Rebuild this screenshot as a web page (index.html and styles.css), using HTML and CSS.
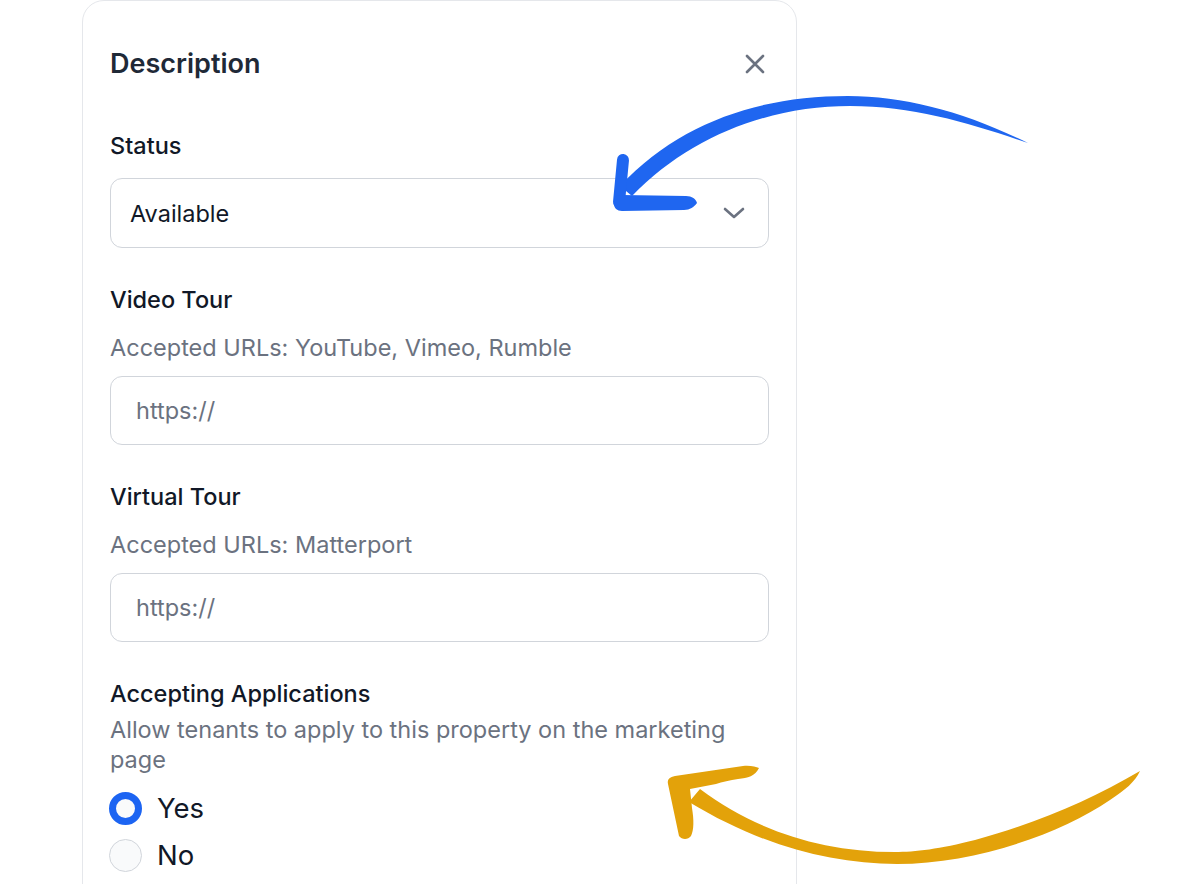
FILE: index.html
```html
<!DOCTYPE html>
<html lang="en">
<head>
<meta charset="utf-8">
<title>Description</title>
<link rel="stylesheet" href="styles.css">
</head>
<body>
<div class="page">
  <section class="card">
    <header class="card-head">
      <h2 class="title">Description</h2>
      <button class="close" type="button" aria-label="Close">
        <svg viewBox="0 0 20 20" width="20" height="20"><path d="M2 2 L18 18 M18 2 L2 18" stroke="#6b7280" stroke-width="2.6" stroke-linecap="round" fill="none"/></svg>
      </button>
    </header>

    <div class="field">
      <label class="label">Status</label>
      <div class="select">
        <span class="select-value">Available</span>
        <svg class="chevron" viewBox="0 0 22 12" width="22" height="12"><path d="M2 2 L11 10 L20 2" stroke="#6b7280" stroke-width="2.6" stroke-linecap="round" stroke-linejoin="round" fill="none"/></svg>
      </div>
    </div>

    <div class="field">
      <label class="label">Video Tour</label>
      <p class="hint">Accepted URLs: YouTube, Vimeo, Rumble</p>
      <div class="input"><span class="placeholder">https://</span></div>
    </div>

    <div class="field">
      <label class="label">Virtual Tour</label>
      <p class="hint">Accepted URLs: Matterport</p>
      <div class="input"><span class="placeholder">https://</span></div>
    </div>

    <div class="field">
      <label class="label">Accepting Applications</label>
      <p class="hint desc">Allow tenants to apply to this property on the marketing page</p>
      <div class="radios">
        <div class="radio-row"><span class="radio checked"></span><span class="radio-label">Yes</span></div>
        <div class="radio-row"><span class="radio"></span><span class="radio-label">No</span></div>
      </div>
    </div>
  </section>

  <svg class="arrows" viewBox="0 0 1180 884" width="1180" height="884">
    <path fill="#1f66f0" d="M1028,143 C965,112 905,96 848,96 C760,96 680,122 620,186 L632,196 C690,136 770,106 850,106 C915,106 972,124 1028,143 Z"/>
    <path d="M623,160 L619,202" stroke="#1f66f0" stroke-width="12" stroke-linecap="round" fill="none"/>
    <path fill="#1f66f0" d="M614,200 C614,196 618,195 622,195 L686,196 C692,196 696,199 697,203 C694,207 690,210 684,210 L622,211 C617,211 614,208 614,204 Z"/>
    <path fill="#e3a20a" d="M1140,771 C1090,800 1040,822 975,840 C940,849 915,852 895,852 C820,852 755,830 700,789 L689,802 C760,845 830,864 897,864 C975,864 1060,834 1110,800 C1125,790 1135,782 1140,771 Z"/>
    <path fill="#e3a20a" d="M668,784 C667,779 670,777 675,776 L743,766 C750,765 756,767 759,768 C755,776 748,778 738,779 C730,780 722,782 716,784 L690,789 L692,808 C694,820 694,830 691,836 C688,840 682,840 679,836 Z"/>
  </svg>
</div>
</body>
</html>
```

FILE: styles.css
```css
* { box-sizing: border-box; }

html, body {
  margin: 0;
  padding: 0;
  background: #ffffff;
}

body {
  font-family: Inter, "Noto Sans", "Liberation Sans", sans-serif;
  color: #111827;
  width: 1180px;
  height: 884px;
  overflow: hidden;
}

.page {
  position: relative;
  width: 1180px;
  height: 884px;
  overflow: hidden;
}

.card {
  margin-left: 82px;
  width: 715px;
  height: 1000px;
  border: 1px solid #e5e7eb;
  border-radius: 22px;
  padding: 46px 27px 0 27px;
  display: flex;
  flex-direction: column;
  gap: 37px;
}

.card-head {
  display: flex;
  align-items: center;
  justify-content: space-between;
  height: 34px;
  margin-bottom: 13px;
}

.title {
  margin: 0;
  font-size: 27px;
  line-height: 34px;
  font-weight: 600;
  color: #1f2937;
}

.close {
  border: 0;
  background: none;
  padding: 0;
  width: 20px;
  height: 20px;
  margin-right: 4px;
  display: flex;
}

.field {
  display: flex;
  flex-direction: column;
}

.label {
  font-size: 23.5px;
  line-height: 30px;
  font-weight: 500;
  color: #111827;
  margin-bottom: 17px;
}

.hint {
  margin: 1px 0 13px 0;
  font-size: 23.5px;
  line-height: 30px;
  color: #6b7280;
}

.hint.desc {
  margin-top: -11px;
  margin-bottom: 13px;
}

.select,
.input {
  height: 70px;
  border: 1px solid #d1d5db;
  border-radius: 12px;
  background: #ffffff;
  display: flex;
  align-items: center;
  font-size: 23.5px;
}

.select {
  padding: 0 23px 0 19px;
  justify-content: space-between;
}

.select-value { color: #111827; }

.input {
  height: 69px;
  padding-left: 25px;
}

.placeholder { color: #6b7280; }

.radios {
  display: flex;
  flex-direction: column;
  gap: 7px;
}

.radio-row {
  display: flex;
  align-items: center;
  height: 40px;
  gap: 15px;
  margin-left: -1px;
}

.radio {
  width: 33px;
  height: 33px;
  border-radius: 50%;
  border: 1px solid #d1d5db;
  background: #f9fafb;
  flex: none;
}

.radio.checked {
  border: 7px solid #1c64f2;
}

.radio-label {
  font-size: 27.5px;
  line-height: 40px;
  color: #111827;
}

.arrows {
  position: absolute;
  left: 0;
  top: 0;
  pointer-events: none;
}
```
